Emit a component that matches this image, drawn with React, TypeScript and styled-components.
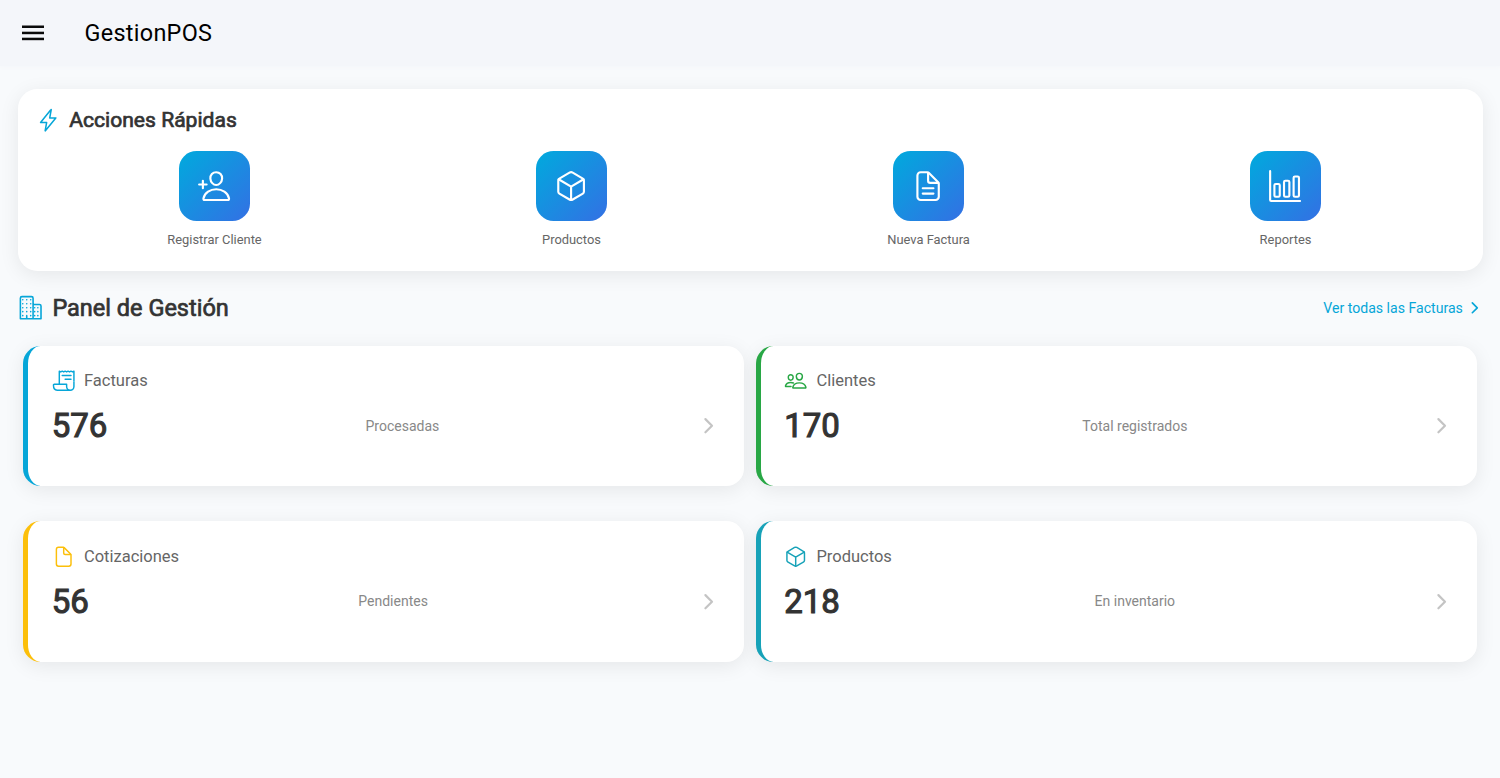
import React from "react";
import styled, { createGlobalStyle } from "styled-components";
import {
  IoFlashOutline, IoPersonAddOutline, IoCubeOutline, IoDocumentTextOutline, IoBarChartOutline,
  IoBusinessOutline, IoReceiptOutline, IoPeopleOutline, IoDocumentOutline, IoChevronForward,
} from "react-icons/io5";
import type { IconType } from "react-icons";

const GlobalStyle = createGlobalStyle`
  * { box-sizing: border-box; }
  body {
    margin: 0;
    background: #f8fafc;
    font-family: Roboto, "Liberation Sans", sans-serif;
    color: #333;
  }
  svg { display: block; flex: none; }
`;

const Page = styled.div`
  min-height: 778px;
  display: flex;
  flex-direction: column;
`;

const Header = styled.header`
  height: 66px;
  display: flex;
  align-items: center;
  padding-left: 22px;
  gap: 40.5px;
  background: #f4f6fa;
  box-shadow: 0 1px 4px #f4f6fa;
  color: #000;
`;

const MenuButton = styled.button`
  padding: 0;
  border: 0;
  background: none;
  color: #0a0a0a;
`;

const AppTitle = styled.h1`
  margin: 0;
  font-size: 23.4px;
  line-height: 30px;
  font-weight: 400;
  letter-spacing: 0.3px;
`;

const QuickCard = styled.section`
  margin: 23px 17px 0 18px;
  height: 182px;
  padding: 15px 19px 16px 18px;
  border-radius: 19.5px;
  background: #fff;
  box-shadow: 0 4px 20px rgba(0, 0, 0, 0.08);
`;

const Heading = styled.h2<{ $size: number; $gap: number }>`
  margin: 0;
  display: flex;
  align-items: center;
  gap: ${(p) => p.$gap}px;
  font-size: ${(p) => p.$size}px;
  line-height: 32px;
  font-weight: 400;
  -webkit-text-stroke: 0.7px #333;
  svg { color: #06a6d8; -webkit-text-stroke: 0; }
`;

const Actions = styled.div`
  display: grid;
  grid-template-columns: repeat(4, 1fr);
  margin-top: 14.5px;
`;

const Action = styled.div`
  display: flex;
  flex-direction: column;
  align-items: center;
  gap: 10px;
  font-size: 12.9px;
  line-height: 18px;
  color: #666;
`;

const ActionTile = styled.div`
  width: 70.3px;
  height: 70.3px;
  border-radius: 17.6px;
  display: grid;
  place-items: center;
  color: #fff;
  background: linear-gradient(135deg, #00aadd, #3370e4);
`;

const PanelBar = styled.div`
  display: flex;
  align-items: center;
  justify-content: space-between;
  margin: 21px 16px 0 18px;
`;

const AllLink = styled.a`
  display: flex;
  align-items: center;
  gap: 3.5px;
  font-size: 14.1px;
  color: #06a6d8;
`;

const Stats = styled.main`
  display: grid;
  grid-template-columns: 1fr 1fr;
  gap: 35px 11.7px;
  margin: 21.6px 23.4px 0;
`;

const StatCard = styled.article<{ $accent: string }>`
  height: 140.6px;
  padding: 23.4px;
  border-left: 5px solid ${(p) => p.$accent};
  border-radius: 17.6px;
  background: #fff;
  box-shadow: 0 4px 20px rgba(0, 0, 0, 0.08);
`;

const StatTitle = styled.div<{ $accent: string }>`
  display: flex;
  align-items: center;
  gap: 8.8px;
  height: 23.4px;
  font-size: 16.5px;
  color: #666;
  svg { color: ${(p) => p.$accent}; }
`;

const StatRow = styled.div`
  display: flex;
  align-items: center;
  justify-content: space-between;
  margin-top: 11px;
  height: 45px;
  svg { color: #c4c4c4; }
`;

const StatNumber = styled.strong`
  font-size: 33px;
  font-weight: 400;
  -webkit-text-stroke: 1.1px #333;
`;

const StatLabel = styled.span`
  font-size: 14px;
  color: #888;
`;

const actions: { label: string; Icon: IconType }[] = [
  { label: "Registrar Cliente", Icon: IoPersonAddOutline },
  { label: "Productos", Icon: IoCubeOutline },
  { label: "Nueva Factura", Icon: IoDocumentTextOutline },
  { label: "Reportes", Icon: IoBarChartOutline },
];

const stats: { title: string; value: number; label: string; accent: string; Icon: IconType }[] = [
  { title: "Facturas", value: 576, label: "Procesadas", accent: "#06a6d8", Icon: IoReceiptOutline },
  { title: "Clientes", value: 170, label: "Total registrados", accent: "#28a745", Icon: IoPeopleOutline },
  { title: "Cotizaciones", value: 56, label: "Pendientes", accent: "#fcbf0a", Icon: IoDocumentOutline },
  { title: "Productos", value: 218, label: "En inventario", accent: "#17a2b8", Icon: IoCubeOutline },
];

export default function App() {
  return (
    <Page>
      <GlobalStyle />
      <Header>
        <MenuButton aria-label="Menú">
          <svg width="22" height="16" viewBox="0 0 22 16" fill="currentColor">
            <rect y="0.5" width="22" height="2.5" />
            <rect y="6.7" width="22" height="2.5" />
            <rect y="12.7" width="22" height="2.5" />
          </svg>
        </MenuButton>
        <AppTitle>GestionPOS</AppTitle>
      </Header>
      <QuickCard>
        <Heading $size={21.1} $gap={8.8}>
          <IoFlashOutline size={24.4} />
          Acciones Rápidas
        </Heading>
        <Actions>
          {actions.map(({ label, Icon }) => (
            <Action key={label}>
              <ActionTile><Icon size={34.2} /></ActionTile>
              {label}
            </Action>
          ))}
        </Actions>
      </QuickCard>
      <PanelBar>
        <Heading $size={23.5} $gap={9}>
          <IoBusinessOutline size={25.4} />
          Panel de Gestión
        </Heading>
        <AllLink>
          Ver todas las Facturas
          <IoChevronForward size={17.6} />
        </AllLink>
      </PanelBar>
      <Stats>
        {stats.map(({ title, value, label, accent, Icon }) => (
          <StatCard key={title} $accent={accent}>
            <StatTitle $accent={accent}>
              <Icon size={23.4} />
              {title}
            </StatTitle>
            <StatRow>
              <StatNumber>{value}</StatNumber>
              <StatLabel>{label}</StatLabel>
              <IoChevronForward size={23.4} />
            </StatRow>
          </StatCard>
        ))}
      </Stats>
    </Page>
  );
}
